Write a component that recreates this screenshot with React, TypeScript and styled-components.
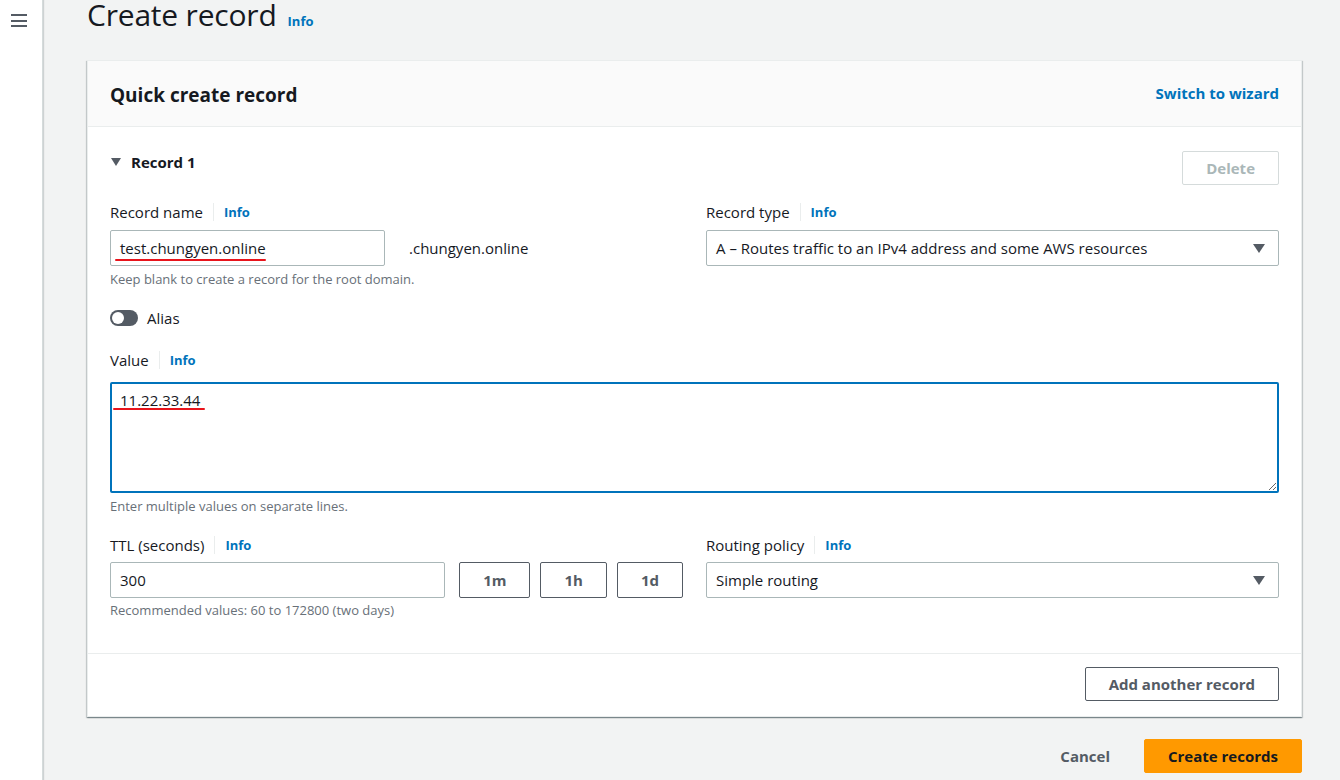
import * as React from 'react';
import styled, { createGlobalStyle } from 'styled-components';

const GlobalStyle = createGlobalStyle`
	html, body {
		margin: 0;
		padding: 0;
		background: #f2f3f3;
		font-family: "Open Sans", "Noto Sans", Arial, sans-serif;
		color: #16191f;
	}
	* {
		box-sizing: border-box;
	}
`;

const Page = styled.div`
	display: flex;
	height: 780px;
	overflow: hidden;
`;

const Sidebar = styled.div`
	width: 43px;
	flex: 0 0 43px;
	background: #fff;
	border-right: 1px solid #d5dbdb;
	box-shadow: 1px 0 1px rgba(0, 28, 36, 0.15);
	padding: 13px 0 0 11px;
`;

const MenuIcon = styled.svg`
	display: block;
	color: #545b64;
`;

const Main = styled.main`
	flex: 1;
	padding: 0 38px 0 44px;
`;

const TitleRow = styled.div`
	display: flex;
	align-items: baseline;
	gap: 11px;
	height: 36px;
`;

const Title = styled.h1`
	margin: 0;
	font-size: 30px;
	line-height: 30px;
	font-weight: 400;
	letter-spacing: -0.2px;
	color: #16191f;
`;

const InfoLink = styled.a<{ $divided?: boolean }>`
	font-size: 13px;
	line-height: 18px;
	font-weight: 700;
	color: #0073bb;
	text-decoration: none;
	cursor: pointer;
	${p => p.$divided && `
		margin-left: 10px;
		padding-left: 10px;
		border-left: 1px solid #eaeded;
	`}
`;

const Card = styled.section`
	margin-top: 24px;
	background: #fff;
	border: 1px solid #eaeded;
	box-shadow: 0 1px 1px 0 rgba(0, 28, 36, 0.3), 1px 1px 1px 0 rgba(0, 28, 36, 0.15), -1px 1px 1px 0 rgba(0, 28, 36, 0.15);
`;

const CardHeader = styled.header`
	display: flex;
	align-items: center;
	justify-content: space-between;
	height: 66px;
	padding: 2px 22px 0;
	background: #fafafa;
	border-bottom: 1px solid #eaeded;

	h2 {
		margin: 0;
		font-size: 19px;
		line-height: 22px;
		font-weight: 700;
	}
`;

const HeaderLink = styled.a`
	font-size: 15px;
	font-weight: 700;
	color: #0073bb;
	text-decoration: none;
	margin-top: -4px;
`;

const CardBody = styled.div`
	padding: 24px 22px 35px;
`;

const RecordHead = styled.div`
	display: flex;
	justify-content: space-between;
	align-items: flex-start;
`;

const Expander = styled.div`
	display: flex;
	align-items: center;
	gap: 10px;
	font-size: 15px;
	font-weight: 700;
	line-height: 22px;
	padding-left: 1px;
`;

const Caret = styled.span`
	width: 0;
	height: 0;
	border-left: 5px solid transparent;
	border-right: 5px solid transparent;
	border-top: 8px solid #545b64;
`;

const Button = styled.button<{ $disabled?: boolean; $primary?: boolean; $plain?: boolean; $tall?: boolean }>`
	height: ${p => (p.$tall ? 36 : 34)}px;
	padding: 0 23px;
	font-family: inherit;
	font-size: 15px;
	font-weight: 700;
	border-radius: 2px;
	cursor: pointer;
	background: #fff;
	border: 1px solid #545b64;
	color: #545b64;
	${p => p.$disabled && `
		border-color: #d5dbdb;
		color: #aab7b8;
		cursor: default;
	`}
	${p => p.$primary && `
		background: #ff9900;
		border-color: #ff9900;
		color: #16191f;
	`}
	${p => p.$plain && `
		background: transparent;
		border-color: transparent;
		padding: 0 20px;
	`}
`;

const TwoCols = styled.div<{ $top: number }>`
	display: grid;
	grid-template-columns: 1fr 1fr;
	column-gap: 23px;
	margin-top: ${p => p.$top}px;
`;

const Field = styled.div<{ $top?: number }>`
	display: flex;
	flex-direction: column;
	margin-top: ${p => p.$top || 0}px;
`;

const Label = styled.div<{ $gap?: number }>`
	display: flex;
	align-items: center;
	font-size: 15px;
	line-height: 22px;
	margin-bottom: ${p => p.$gap ?? 7}px;
`;

const Hint = styled.div<{ $top?: number }>`
	font-size: 13px;
	line-height: 16px;
	color: #687078;
	margin-top: ${p => p.$top ?? 5}px;
`;

const Row = styled.div`
	display: flex;
	align-items: center;
`;

const Input = styled.div<{ $width?: number }>`
	position: relative;
	height: 36px;
	${p => (p.$width ? `width: ${p.$width}px;` : 'flex: 1 1 auto;')}
	border: 1px solid #aab7b8;
	border-radius: 2px;
	padding: 0 9px;
	display: flex;
	align-items: center;
	font-size: 15px;
	background: #fff;
`;

const Marked = styled.span`
	position: relative;
	&::after {
		content: '';
		position: absolute;
		left: -5px;
		right: 0;
		bottom: -3px;
		height: 2px;
		border-radius: 1px;
		background: #e8141c;
	}
`;

const Suffix = styled.span`
	margin-left: 24px;
	font-size: 15px;
`;

const Select = styled.div`
	height: 36px;
	border: 1px solid #aab7b8;
	border-radius: 2px;
	padding: 0 13px 0 9px;
	display: flex;
	align-items: center;
	justify-content: space-between;
	font-size: 15px;
	background: #fff;
`;

const SelectArrow = styled.span`
	width: 0;
	height: 0;
	border-left: 6px solid transparent;
	border-right: 6px solid transparent;
	border-top: 9px solid #545b64;
`;

const Toggle = styled.span`
	position: relative;
	width: 28px;
	height: 16px;
	border-radius: 8px;
	background: #545b64;

	&::after {
		content: '';
		position: absolute;
		top: 2px;
		left: 2px;
		width: 12px;
		height: 12px;
		border-radius: 50%;
		background: #fff;
	}
`;

const ToggleRow = styled.label`
	display: flex;
	align-items: center;
	gap: 9px;
	margin-top: 20px;
	font-size: 15px;
	line-height: 22px;
`;

const AreaWrap = styled.div`
	position: relative;
	display: flex;
`;

const TextArea = styled.textarea`
	width: 100%;
	height: 111px;
	border: 2px solid #0073bb;
	border-radius: 2px;
	padding: 5px 8px;
	font-family: inherit;
	font-size: 15px;
	line-height: 22px;
	color: #16191f;
	outline: none;
	resize: vertical;
`;

const AreaMark = styled.span`
	position: absolute;
	left: 3px;
	top: 26px;
	width: 92px;
	height: 2px;
	border-radius: 1px;
	background: #e8141c;
`;

const QuickButtons = styled.div`
	display: flex;
	gap: 10px;
	margin-left: 14px;
`;

const CardFooter = styled.footer`
	display: flex;
	justify-content: flex-end;
	padding: 13px 22px 15px;
	border-top: 1px solid #eaeded;
`;

const Actions = styled.div`
	display: flex;
	justify-content: flex-end;
	align-items: center;
	gap: 13px;
	margin-top: 22px;
`;

function Info({ divided = true }: { divided?: boolean }) {
	return <InfoLink $divided={divided}>Info</InfoLink>;
}

export default function App() {
	return (
		<>
			<GlobalStyle />
			<Page>
				<Sidebar>
					<MenuIcon width="17" height="15" viewBox="0 0 17 15">
						<rect x="0" y="1" width="16" height="2" fill="currentColor" />
						<rect x="0" y="7" width="16" height="2" fill="currentColor" />
						<rect x="0" y="12" width="16" height="2" fill="currentColor" />
					</MenuIcon>
				</Sidebar>
				<Main>
					<TitleRow>
						<Title>Create record</Title>
						<Info divided={false} />
					</TitleRow>

					<Card>
						<CardHeader>
							<h2>Quick create record</h2>
							<HeaderLink>Switch to wizard</HeaderLink>
						</CardHeader>

						<CardBody>
							<RecordHead>
								<Expander>
									<Caret />
									Record 1
								</Expander>
								<Button $disabled>Delete</Button>
							</RecordHead>

							<TwoCols $top={16}>
								<Field>
									<Label>Record name<Info /></Label>
									<Row>
										<Input $width={275}>
											<Marked>test.chungyen.online</Marked>
										</Input>
										<Suffix>.chungyen.online</Suffix>
									</Row>
									<Hint>Keep blank to create a record for the root domain.</Hint>
								</Field>
								<Field>
									<Label>Record type<Info /></Label>
									<Select>
										A – Routes traffic to an IPv4 address and some AWS resources
										<SelectArrow />
									</Select>
								</Field>
							</TwoCols>

							<ToggleRow>
								<Toggle />
								Alias
							</ToggleRow>

							<Field $top={20}>
								<Label $gap={11}>Value<Info /></Label>
								<AreaWrap>
									<TextArea readOnly defaultValue="11.22.33.44" />
									<AreaMark />
								</AreaWrap>
								<Hint>Enter multiple values on separate lines.</Hint>
							</Field>

							<TwoCols $top={20}>
								<Field>
									<Label $gap={6}>TTL (seconds)<Info /></Label>
									<Row>
										<Input>300</Input>
										<QuickButtons>
											<Button $tall>1m</Button>
											<Button $tall>1h</Button>
											<Button $tall>1d</Button>
										</QuickButtons>
									</Row>
									<Hint $top={4}>Recommended values: 60 to 172800 (two days)</Hint>
								</Field>
								<Field>
									<Label $gap={6}>Routing policy<Info /></Label>
									<Select>
										Simple routing
										<SelectArrow />
									</Select>
								</Field>
							</TwoCols>
						</CardBody>

						<CardFooter>
							<Button>Add another record</Button>
						</CardFooter>
					</Card>

					<Actions>
						<Button $plain>Cancel</Button>
						<Button $primary>Create records</Button>
					</Actions>
				</Main>
			</Page>
		</>
	);
}
